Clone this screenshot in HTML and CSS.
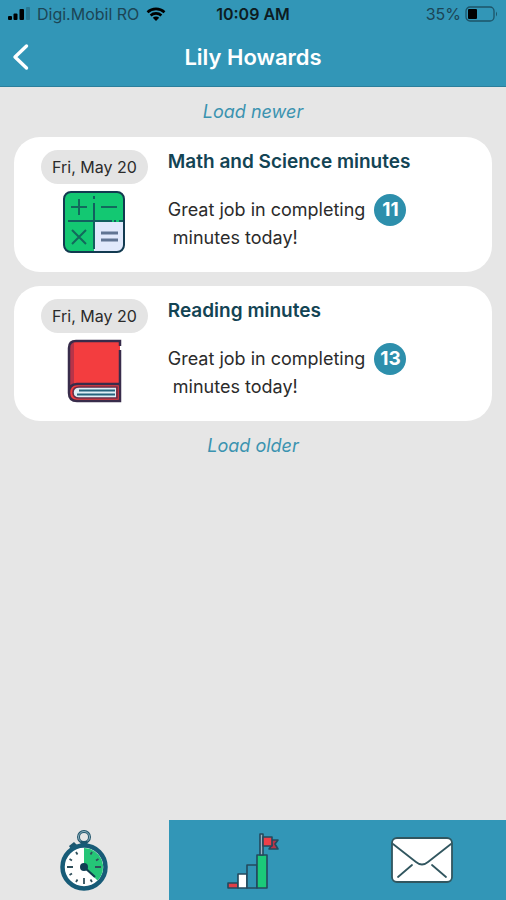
FILE: index.html
```html
<!DOCTYPE html>
<html lang="en">
<head>
<meta charset="UTF-8">
<meta name="viewport" content="width=device-width, initial-scale=1.0">
<title>Lily Howards</title>
<link rel="stylesheet" href="styles.css">
</head>
<body>

<header class="header">
  <div class="status">
    <div class="status-left">
      <svg width="22" height="14" viewBox="0 0 22 14" aria-hidden="true">
        <rect x="0" y="9" width="4" height="4" rx="1"/>
        <rect x="5.500" y="6.500" width="4" height="6.500" rx="1"/>
        <rect x="11.500" y="2" width="4.500" height="11" rx="1"/>
        <rect x="18" y="0" width="4" height="13" rx="1" opacity=".2"/>
      </svg>
      <span>Digi.Mobil RO</span>
      <svg width="20" height="14" viewBox="0 0 20 14" aria-hidden="true">
        <path d="M1.500 5.200a12.500 12.500 0 0 1 17 0M4.600 8.500a8 8 0 0 1 10.800 0" fill="none" stroke="#000" stroke-width="2.600"/>
        <path d="M10 14L6.800 10.800a4.600 4.600 0 0 1 6.400 0z"/>
      </svg>
    </div>
    <span class="status-time">10:09 AM</span>
    <div class="status-right">
      <span>35%</span>
      <svg width="33" height="16" viewBox="0 0 33 16" aria-hidden="true">
        <rect x="1" y="1" width="28" height="14" rx="4" fill="none" stroke="#1d5468" stroke-width="1.300"/>
        <rect x="3" y="3" width="9" height="10" rx="1"/>
        <path d="M31 5.500q2 2.500 0 5z" fill="#1d5468"/>
      </svg>
    </div>
  </div>
  <div class="title-bar">
    <button class="back" type="button" aria-label="Back">
      <svg width="18" height="28" viewBox="0 0 18 28" aria-hidden="true">
        <path d="M14.500 3L3 14l11.500 11" fill="none" stroke="#fff" stroke-width="3.400" stroke-linecap="round" stroke-linejoin="round"/>
      </svg>
    </button>
    <h1>Lily Howards</h1>
  </div>
</header>

<main class="messages">
  <a class="load" href="#newer">Load newer</a>

  <article class="card">
    <div class="card-side">
      <time class="date" datetime="05-20">Fri, May 20</time>
      <svg width="64" height="64" viewBox="0 0 64 64" aria-hidden="true">
        <rect x="2" y="2" width="60" height="60" rx="7" fill="#13c872"/>
        <path d="M32 32h30v23a7 7 0 0 1-7 7H32z" fill="#e1e9fc"/>
        <rect x="2" y="2" width="60" height="60" rx="7" fill="none" stroke="#123a50" stroke-width="2"/>
        <path d="M32 6v3M32 13v46M6 31h44M52 31h2M57 31h4" fill="none" stroke="#12605f" stroke-width="2"/>
        <path d="M9 17h16M17 9v16M39 17h16M10 40l14 14M24 40L10 54" fill="none" stroke="#126a5c" stroke-width="2"/>
        <path d="M39 43h17M39 50h17" stroke="#607493" stroke-width="3"/>
      </svg>
    </div>
    <div class="card-text">
      <h2>Math and Science minutes</h2>
      <p>Great job in completing <b class="count">11</b><br>&nbsp;minutes today!</p>
    </div>
  </article>

  <article class="card">
    <div class="card-side">
      <time class="date" datetime="05-20">Fri, May 20</time>
      <svg width="64" height="64" viewBox="0 0 64 64" aria-hidden="true">
        <path d="M58 2H14q-7 0-7 7v46q0 7 7 7h44z" fill="#f33d3f"/>
        <path d="M8 8q1-4 4-5v42q-3 1-4 4z" fill="#b73448"/>
        <path d="M58 7V2H14q-7 0-7 7v45q0 8 8 8h43V11M7 54q0-9 8-9h43" fill="none" stroke="#382c4b" stroke-width="2.500"/>
        <path d="M54 48H17q-6 0-6 5.500T17 59h37z" fill="#deeff6"/>
        <path d="M55 48H17q-6 0-6 5.500T17 59h38z" fill="none" stroke="#662d48" stroke-width="1.600"/>
        <path d="M17 51.500h36M15 55.500h38" stroke="#24637c" stroke-width="1.800"/>
      </svg>
    </div>
    <div class="card-text">
      <h2>Reading minutes</h2>
      <p>Great job in completing <b class="count">13</b><br>&nbsp;minutes today!</p>
    </div>
  </article>

  <a class="load" href="#older">Load older</a>
</main>

<nav class="tabs">
  <a class="tab active" href="#minutes" aria-label="Minutes">
    <svg width="50" height="64" viewBox="0 0 50 64" aria-hidden="true">
      <circle cx="25" cy="9" r="5.500" fill="none" stroke="#22556c" stroke-width="3"/>
      <circle cx="25" cy="9" r="5.500" fill="none" stroke="#8fb3c0" stroke-width="1"/>
      <path d="M21.500 13h7v6h-7zM10 18l5-4 4 4-6 5z" fill="#1c566e"/>
      <circle cx="25" cy="39" r="21.500" fill="#fff" stroke="#175b77" stroke-width="4.500"/>
      <path d="M25 39V20a19 19 0 0 1 13.500 32.500z" fill="#25c577"/>
      <path d="M25 39l11 10" stroke="#123f50" stroke-width="2.200"/>
      <path d="M8 39h6M36 39h6M25 50v6M17 24l1.500 2.500M33 24l-1.500 2.500M10.500 31l2.500 1.500M39.500 31L37 32.500M10.500 47l2.500-1.500M17 54l1.500-2.500M33 54l-1.500-2.500" stroke="#304f5b" stroke-width="1.800"/>
      <circle cx="25" cy="39" r="4" fill="#103e55"/>
    </svg>
  </a>
  <a class="tab" href="#progress" aria-label="Progress">
    <svg width="56" height="60" viewBox="-1 -2 56 60" aria-hidden="true">
      <g stroke="#24495d" stroke-width="1.600" stroke-linejoin="round">
        <path d="M2 51h10v5H2z" fill="#df3f48"/>
        <path d="M12 42h9v14h-9z" fill="#fff"/>
        <path d="M21 56V33h10v23z" fill="#3194b5"/>
        <path d="M31 23h10v33H31z" fill="#1bca79"/>
        <path d="M34 2h3v21h-3z" fill="#9eb5c5"/>
        <path d="M44 8h8l-3 4 3 5h-9l3-4z" fill="#b83449"/>
        <path d="M37 5h9v9h-9z" fill="#ef3f48"/>
      </g>
    </svg>
  </a>
  <a class="tab" href="#mail" aria-label="Mail">
    <svg width="62" height="48" viewBox="0 0 62 48" aria-hidden="true">
      <g fill="none" stroke="#31565f" stroke-width="1.800" stroke-linecap="round">
        <rect x="1" y="2" width="60" height="44" rx="5" fill="#fff"/>
        <path d="M2 8l23 18q6 5 12 0L60 8M7 41l14-12M55 41L41 29"/>
      </g>
    </svg>
  </a>
</nav>

</body>
</html>
```

FILE: styles.css
```css
* {
  box-sizing: border-box;
}
body {
  display: flex;
  flex-direction: column;
  min-height: 100vh;
  margin: 0;
  background-color: #e6e6e6;
  color: #2b2b2b;
  font-family: Inter, Roboto, sans-serif;
}
.header {
  background-color: #3296b7;
  border-bottom: 1px solid #2b7f9c;
}
.status {
  display: grid;
  grid-template-columns: 1fr auto 1fr;
  align-items: center;
  height: 28px;
  padding: 0 8px;
  color: #1c4555;
  font-size: 16px;
}
.status-left, .status-right {
  display: flex;
  align-items: center;
  gap: 7px;
}
.status-right {
  justify-content: flex-end;
  gap: 4px;
}
.status-time {
  color: #0d1c22;
  font-weight: 600;
}
.title-bar {
  display: grid;
  grid-template-columns: 44px 1fr 44px;
  align-items: center;
  height: 58px;
}
.back {
  display: flex;
  padding: 8px 12px;
  border: none;
  background: none;
  cursor: pointer;
}
h1 {
  margin: 0;
  color: #fff;
  font-size: 22px;
  font-weight: 600;
  text-align: center;
}
.messages {
  display: flex;
  flex: 1;
  flex-direction: column;
  gap: 14px;
  padding: 14px;
}
.load {
  align-self: center;
  color: #3b93b0;
  font-size: 18px;
  font-style: italic;
  line-height: 22px;
  text-decoration: none;
}
.card {
  display: flex;
  gap: 20px;
  padding: 13px 27px 18px;
  border-radius: 26px;
  background-color: #fff;
}
.card-side {
  display: flex;
  flex-direction: column;
  align-items: center;
  gap: 6px;
}
.date {
  padding: 0 11px;
  border-radius: 17px;
  background-color: #e4e4e4;
  font-size: 16px;
  line-height: 34px;
}
.card-text {
  flex: 1;
}
h2 {
  margin: 0 0 22px;
  color: #134454;
  font-size: 19px;
  font-weight: 600;
  line-height: 24px;
}
p {
  margin: 0;
  font-size: 18px;
  line-height: 28px;
}
.count {
  display: inline-block;
  width: 32px;
  margin: -2px 4px;
  border-radius: 50%;
  background-color: #2d8fac;
  color: #fff;
  font-size: 19px;
  line-height: 32px;
  text-align: center;
}
.tabs {
  display: grid;
  grid-template-columns: repeat(3, 1fr);
  height: 80px;
}
.tab {
  display: flex;
  align-items: center;
  justify-content: center;
  background-color: #3296b7;
}
.tab.active {
  background-color: #e6e6e6;
}
```
